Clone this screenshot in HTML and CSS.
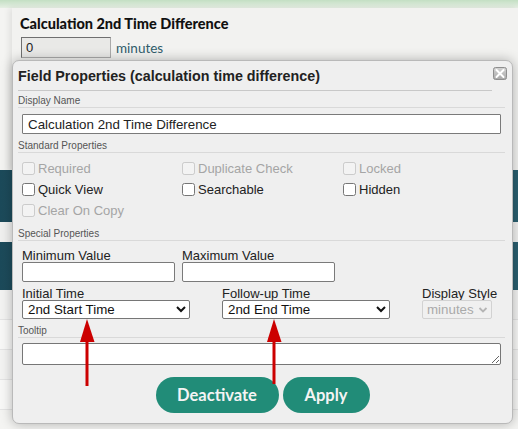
FILE: index.html
```html
<!DOCTYPE html>
<html>
<head>
<meta charset="utf-8">
<link rel="stylesheet" href="styles.css">
</head>
<body>
<div class="topline"></div>
<div class="page">
  <div class="card">
    <div class="card-title">Calculation 2nd Time Difference</div>
    <div class="card-row"><input class="min-input" value="0"><span class="unit">minutes</span></div>
  </div>
  <div class="list">
    <div class="band"></div>
    <div class="sep"></div>
    <div class="band band2"></div>
    <div class="lrow"></div>
    <div class="lrow alt"></div>
    <div class="lrow"></div>
    <div class="lrow alt"></div>
  </div>
</div>

<div class="dialog">
  <div class="dlg-head">
    <div class="dlg-title">Field Properties (calculation time difference)</div>
    <div class="close">
      <svg width="14" height="13" viewBox="0 0 14 13">
        <defs>
          <linearGradient id="cg" x1="0" y1="0" x2="0" y2="1">
            <stop offset="0" stop-color="#d4d4d4"/>
            <stop offset="1" stop-color="#a8a8a8"/>
          </linearGradient>
        </defs>
        <rect x="0.5" y="0.5" width="13" height="12" rx="2" fill="url(#cg)" stroke="#8e8e8e"/>
        <path d="M3.5 3 L10.5 10 M10.5 3 L3.5 10" stroke="#fff" stroke-width="2" stroke-linecap="round"/>
      </svg>
    </div>
  </div>

  <div class="sect">Display Name</div>
  <input class="name-input" value="Calculation 2nd Time Difference">

  <div class="sect sect-std">Standard Properties</div>
  <div class="checks">
    <label class="chk dis"><input type="checkbox" disabled>Required</label>
    <label class="chk dis"><input type="checkbox" disabled>Duplicate Check</label>
    <label class="chk dis"><input type="checkbox" disabled>Locked</label>
    <label class="chk"><input type="checkbox">Quick View</label>
    <label class="chk"><input type="checkbox">Searchable</label>
    <label class="chk"><input type="checkbox">Hidden</label>
    <label class="chk dis"><input type="checkbox" disabled>Clear On Copy</label>
  </div>

  <div class="sect sect-spec">Special Properties</div>
  <div class="frow frow1">
    <div class="field w153"><div class="flabel">Minimum Value</div><input class="tinput"></div>
    <div class="field w153"><div class="flabel">Maximum Value</div><input class="tinput"></div>
  </div>
  <div class="frow frow2">
    <div class="field w168"><div class="flabel">Initial Time</div>
      <select class="sel"><option>2nd Start Time</option></select></div>
    <div class="field w168"><div class="flabel">Follow-up Time</div>
      <select class="sel"><option>2nd End Time</option></select></div>
    <div class="field w70"><div class="flabel">Display Style</div>
      <span class="selwrap"><select class="sel sel-dis" disabled><option>minutes</option></select>
        <svg class="chev" width="10" height="6" viewBox="0 0 10 6"><path d="M1.5 1 L5 4.5 L8.5 1" fill="none" stroke="#b5b5b5" stroke-width="1.8"/></svg>
      </span></div>
  </div>

  <div class="sect sect-tip">Tooltip</div>
  <textarea class="tip"></textarea>

  <div class="buttons">
    <button class="btn btn-deact">Deactivate</button>
    <button class="btn btn-apply">Apply</button>
  </div>
</div>

<svg class="arrows" width="518" height="429" viewBox="0 0 518 429">
  <path d="M87 386 L87 338" stroke="#cc0000" stroke-width="3"/>
  <path d="M87 319 L80 342 L94.5 342 Z" fill="#cc0000"/>
  <path d="M274 384 L274 338" stroke="#cc0000" stroke-width="3"/>
  <path d="M274 319 L267 342 L281.5 342 Z" fill="#cc0000"/>
</svg>
</body>
</html>
```

FILE: styles.css
```css
* { box-sizing: border-box; }
html, body { margin: 0; padding: 0; }
body {
  width: 518px;
  height: 429px;
  overflow: hidden;
  background: #f4f4f2;
  font-family: "Liberation Sans", Arial, sans-serif;
  position: relative;
}
.topline {
  height: 8px;
  background: linear-gradient(#c3dfc3, #e6efe4);
}
.page { padding-left: 12px; }
.card {
  height: 162px;
  background: #f2f2f0;
  box-shadow: -3px 0 6px rgba(0,0,0,0.08);
  padding: 7px 0 0 8px;
}
.card-title {
  font-family: Lato, sans-serif;
  font-weight: 900;
  font-size: 14.5px;
  line-height: 18px;
  color: #111;
}
.card-row {
  margin-top: 4px;
  display: flex;
  align-items: center;
}
.min-input {
  width: 90px;
  height: 21px;
  margin: 0 0 0 1px;
  background: #e9e9e7;
  border: 1px solid #6f6f6f;
  border-right-color: #aaa;
  border-bottom-color: #aaa;
  font-family: "Liberation Sans", Arial, sans-serif;
  font-size: 13px;
  padding: 0 4px;
  color: #222;
}
.unit {
  margin-left: 5px;
  font-family: Lato, sans-serif;
  font-size: 13.5px;
  color: #2f5c6b;
}
.list {
  margin-left: -12px;
  width: 518px;
}
.band {
  height: 52px;
  background: linear-gradient(90deg, #1c4a5a, #2b6272 40%, #2b6272 60%, #2a5f6f);
}
.sep { height: 20px; background: #f0f0ef; }
.band2 { height: 48px; }
.lrow { height: 30px; background: #f3f3f2; border-bottom: 1px solid #e4e4e4; }
.lrow.alt { background: #f8f8f7; }

.dialog {
  position: absolute;
  left: 12px;
  top: 60px;
  width: 501px;
  height: 364px;
  background: #efefef;
  border: 1px solid #b9b9b9;
  border-radius: 7px;
  box-shadow: 0 0 12px rgba(0,0,0,0.28);
  padding: 0;
}
.dlg-head {
  display: flex;
  align-items: flex-start;
  padding: 0 5px 0 5px;
}
.dlg-title {
  flex: 1;
  font-weight: bold;
  font-size: 14.3px;
  line-height: 18px;
  color: #222;
  padding: 6px 0 5px 0;
  border-bottom: 1px solid #c8c8c8;
}
.close {
  margin: 6px 0 0 1px;
  width: 14px;
  height: 13px;
  display: flex;
}
.sect {
  margin: 4px 7px 0 5px;
  font-size: 10px;
  line-height: 12px;
  color: #555;
  border-bottom: 1px solid #d9d9d9;
}
.name-input {
  display: block;
  margin: 6px 0 0 9px;
  width: 479px;
  height: 20px;
  border: 1px solid #7a7a7a;
  border-radius: 1px;
  background: #fff;
  font-family: "Liberation Sans", Arial, sans-serif;
  font-size: 13.333px;
  padding: 0 5px;
  color: #222;
}
.sect-std { margin-top: 6px; }
.checks {
  margin: 5px 0 0 9px;
  display: grid;
  grid-template-columns: 160px 161px 1fr;
  grid-auto-rows: 21px;
}
.chk {
  display: flex;
  align-items: center;
  font-size: 13px;
  color: #222;
}
.chk input {
  margin: 0 3px 0 0;
  width: 13px;
  height: 13px;
}
.chk.dis { color: #a5a5a5; }
.sect-spec { margin-top: 7px; }
.frow {
  display: flex;
  margin-left: 9px;
}
.frow1 { margin-top: 8px; gap: 7px; }
.frow2 { margin-top: 5px; gap: 32px; }
.field { display: flex; flex-direction: column; }
.w153 { width: 153px; }
.w168 { width: 168px; }
.w70 { width: 70px; }
.flabel {
  font-size: 13px;
  line-height: 13px;
  color: #222;
  white-space: nowrap;
}
.tinput {
  width: 100%;
  height: 20px;
  margin: 0;
  border: 1px solid #7a7a7a;
  border-radius: 2px;
  background: #fff;
}
.sel {
  width: 100%;
  height: 19px;
  margin: 0;
  font-family: "Liberation Sans", Arial, sans-serif;
  font-size: 13.333px;
  color: #111;
  background: #fff;
  border: 1px solid #767676;
  border-radius: 2px;
  padding: 0 1px;
}
.selwrap {
  position: relative;
  display: block;
  width: 100%;
}
.sel-dis {
  display: block;
  appearance: none;
  -webkit-appearance: none;
  color: #aaa;
  background: #f0f0f0;
  border-color: #d2d2d2;
  padding: 0 0 0 4px;
  opacity: 1;
}
.chev {
  position: absolute;
  right: 4px;
  top: 7px;
}
.sect-tip { margin-top: 6px; }
.tip {
  display: block;
  margin: 5px 0 0 9px;
  width: 479px;
  height: 22px;
  border: 1px solid #767676;
  border-radius: 2px;
  background: #fff;
  resize: both;
}
.buttons {
  margin-top: 12px;
  display: flex;
  justify-content: center;
  gap: 4px;
}
.btn {
  height: 36px;
  border: none;
  border-radius: 18px;
  background: #218c78;
  color: #f4f4f4;
  font-family: Lato, sans-serif;
  font-weight: 700;
  font-size: 16.5px;
  margin: 0;
}
.btn-deact { width: 123px; }
.btn-apply { width: 87px; }
.arrows {
  position: absolute;
  left: 0;
  top: 0;
  pointer-events: none;
}
```
